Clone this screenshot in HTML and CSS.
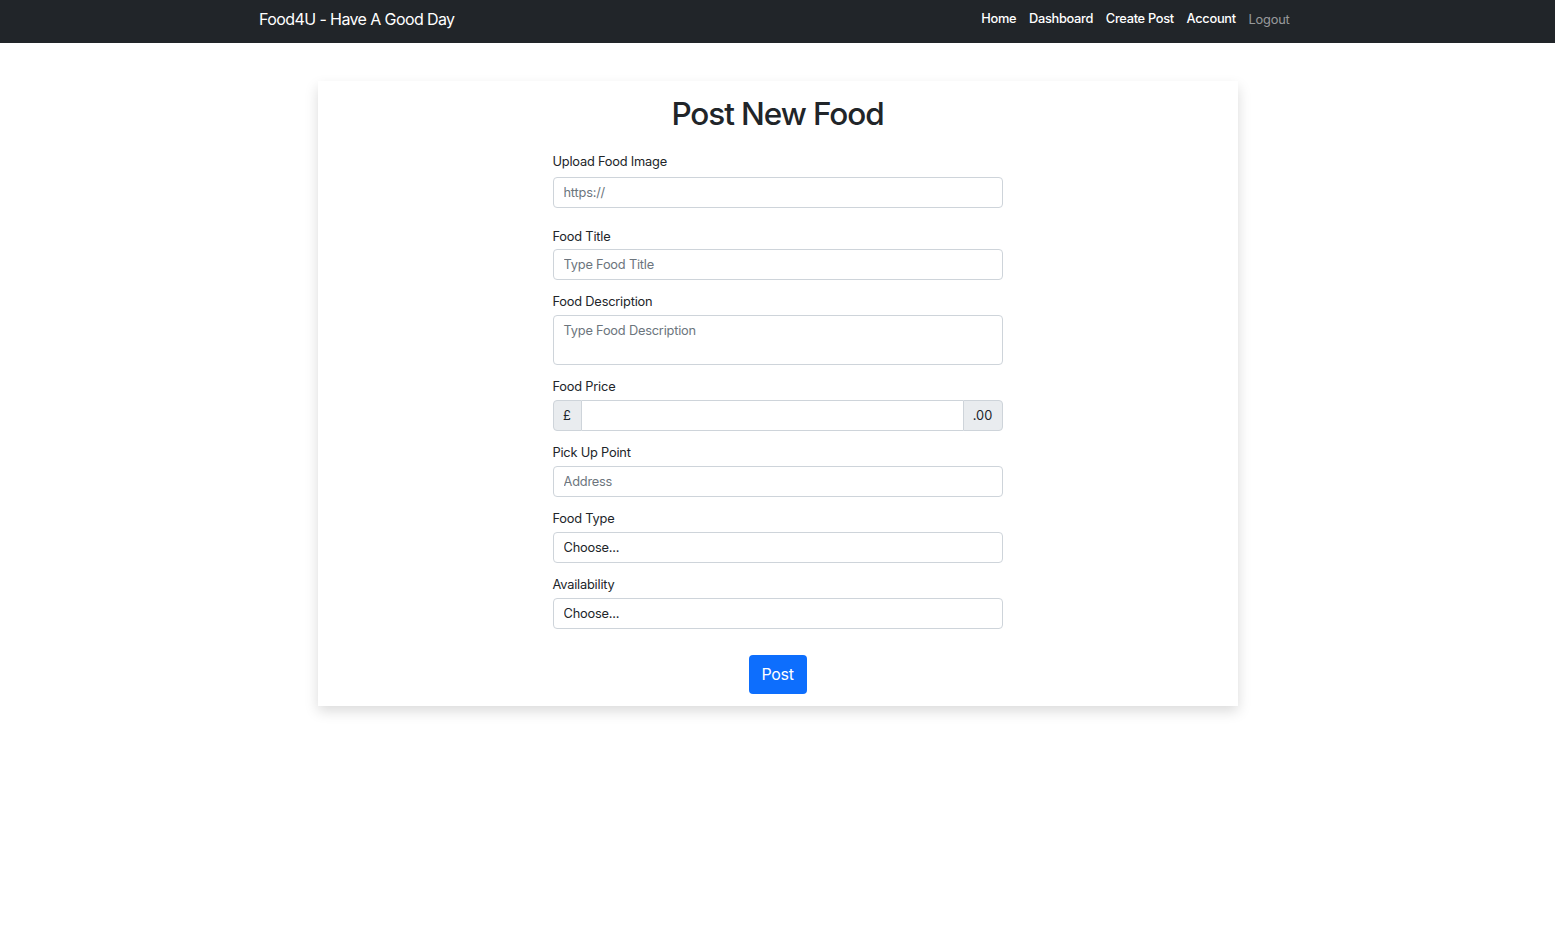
FILE: index.html
```html
<!DOCTYPE html>
<html lang="en">
<head>
<meta charset="utf-8">
<title>Food4U - Post New Food</title>
<link rel="stylesheet" href="styles.css">
</head>
<body>
<nav class="navbar">
  <div class="nav-container">
    <a class="brand" href="#">Food4U - Have A Good Day</a>
    <ul class="nav-links">
      <li><a class="nav-link active" href="#">Home</a></li>
      <li><a class="nav-link active" href="#">Dashboard</a></li>
      <li><a class="nav-link active" href="#">Create Post</a></li>
      <li><a class="nav-link active" href="#">Account</a></li>
      <li><a class="nav-link muted" href="#">Logout</a></li>
    </ul>
  </div>
</nav>

<main class="page">
  <section class="card">
    <h1 class="card-title">Post New Food</h1>
    <form class="post-form">
      <div class="group group-first">
        <label class="form-label first" for="img">Upload Food Image</label>
        <input class="form-control" id="img" type="text" placeholder="https://">
      </div>
      <div class="group">
        <label class="form-label tight" for="title">Food Title</label>
        <input class="form-control" id="title" type="text" placeholder="Type Food Title">
      </div>
      <div class="group">
        <label class="form-label" for="desc">Food Description</label>
        <textarea class="form-control textarea" id="desc" placeholder="Type Food Description"></textarea>
      </div>
      <div class="group">
        <label class="form-label" for="price">Food Price</label>
        <div class="input-group">
          <span class="addon addon-left">£</span>
          <input class="form-control grouped" id="price" type="text">
          <span class="addon addon-right">.00</span>
        </div>
      </div>
      <div class="group">
        <label class="form-label" for="addr">Pick Up Point</label>
        <input class="form-control" id="addr" type="text" placeholder="Address">
      </div>
      <div class="group">
        <label class="form-label" for="type">Food Type</label>
        <select class="form-control select" id="type">
          <option>Choose...</option>
        </select>
      </div>
      <div class="group">
        <label class="form-label" for="avail">Availability</label>
        <select class="form-control select" id="avail">
          <option>Choose...</option>
        </select>
      </div>
      <div class="actions">
        <button class="btn-primary" type="button">Post</button>
      </div>
    </form>
  </section>
</main>
</body>
</html>
```

FILE: styles.css
```css
* {
  box-sizing: border-box;
}

html, body {
  margin: 0;
  padding: 0;
  background: #ffffff;
  font-family: Inter, "Noto Sans", "Liberation Sans", sans-serif;
  color: #212529;
  font-size: 12.8px;
}

body {
  min-height: 936px;
}

a {
  text-decoration: none;
}

/* Navbar */
.navbar {
  background: #212529;
  height: 43px;
}

.nav-container {
  width: 1056px;
  margin: 0 auto;
  padding: 0 9.6px;
  height: 100%;
  display: flex;
  align-items: center;
  justify-content: space-between;
}

.brand {
  color: #ffffff;
  font-size: 16px;
  line-height: 24px;
  margin-top: -5px;
  letter-spacing: -0.6px;
}

.nav-links {
  list-style: none;
  margin: 0;
  padding: 0;
  display: flex;
  align-items: center;
}

.nav-link {
  display: block;
  padding: 0 6.4px;
  font-size: 12.8px;
  line-height: 19px;
  margin-top: -6px;
  letter-spacing: -0.3px;
}

.nav-link.active {
  color: #ffffff;
  font-weight: 500;
}

.nav-link.muted {
  color: rgba(255, 255, 255, 0.55);
  margin-top: -4px;
  letter-spacing: -0.2px;
}

/* Card */
.page {
  padding: 38px 0 60px;
}

.card {
  width: 920px;
  margin: 0 auto;
  background: #ffffff;
  box-shadow: 0 6.4px 12.8px rgba(0, 0, 0, 0.15);
  padding: 14px 0 12px;
}

.card-title {
  margin: 0;
  text-align: center;
  font-size: 31.5px;
  font-weight: 500;
  line-height: 38px;
  color: #212529;
  letter-spacing: -1.1px;
}

.post-form {
  width: 450px;
  margin: 19px auto 0;
}

.group {
  margin-bottom: 12px;
}

.group-first {
  margin-bottom: 19px;
}

.form-label {
  display: block;
  font-size: 12.8px;
  line-height: 19px;
  margin-bottom: 4px;
  color: #212529;
  letter-spacing: -0.2px;
}

.form-label.first {
  margin-bottom: 6px;
}

.form-label.tight {
  margin-bottom: 3px;
}

.form-control {
  display: block;
  width: 100%;
  height: 31px;
  padding: 0 10px;
  font-family: inherit;
  font-size: 12.8px;
  line-height: 19px;
  color: #212529;
  background: #ffffff;
  border: 1px solid #ced4da;
  border-radius: 4px;
  outline: none;
  letter-spacing: -0.2px;
}

.form-control::placeholder {
  color: #6c757d;
}

.textarea {
  height: 50px;
  padding: 5px 10px;
  resize: none;
}

.select {
  appearance: none;
  -webkit-appearance: none;
}

.input-group {
  display: flex;
  height: 31px;
}

.addon {
  display: flex;
  align-items: center;
  justify-content: center;
  background: #e9ecef;
  border: 1px solid #ced4da;
  font-size: 12.8px;
  color: #212529;
}

.addon-left {
  width: 29px;
  border-radius: 4px 0 0 4px;
}

.addon-right {
  width: 40px;
  border-radius: 0 4px 4px 0;
}

.form-control.grouped {
  flex: 1;
  border-radius: 0;
  border-left: none;
  border-right: none;
}

.actions {
  display: flex;
  justify-content: center;
  padding-top: 14px;
}

.btn-primary {
  width: 58px;
  height: 39px;
  background: #0d6efd;
  color: #ffffff;
  border: none;
  border-radius: 4px;
  font-family: inherit;
  font-size: 16px;
  line-height: 24px;
  padding: 0 0 2px;
  letter-spacing: -0.3px;
}
```
